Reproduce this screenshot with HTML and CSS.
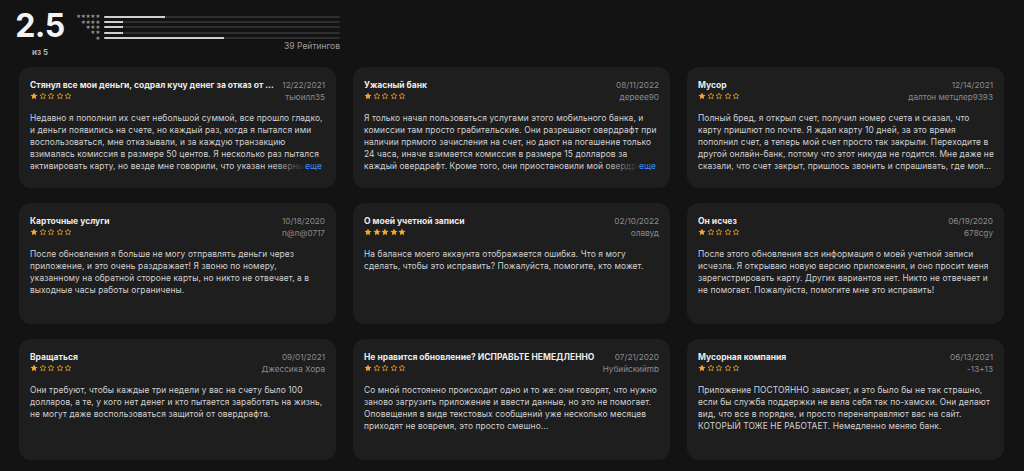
FILE: index.html
```html
<!DOCTYPE html>
<html lang="ru">
<head>
<meta charset="utf-8">
<title>Отзывы</title>
<link rel="stylesheet" href="styles.css">
</head>
<body>
<svg width="0" height="0" class="defs">
  <defs>
    <symbol id="sf" viewBox="0 0 24 24"><path d="M12 1.5l3.2 6.7 7.3.9-5.4 5 1.4 7.3L12 17.8l-6.5 3.6 1.4-7.3-5.4-5 7.3-.9z" fill="#f2a531"/></symbol>
    <symbol id="so" viewBox="0 0 24 24"><path d="M12 3.2l2.7 5.7 6.2.8-4.6 4.3 1.2 6.2L12 17.1l-5.5 3.1 1.2-6.2-4.6-4.3 6.2-.8z" fill="none" stroke="#f2a531" stroke-width="2.2" stroke-linejoin="round"/></symbol>
  </defs>
</svg>

<header class="summary">
  <div class="score">
    <div class="big">2.5</div>
    <div class="outof">из 5</div>
  </div>
  <div class="hist">
    <div class="hrow"><span class="hs">★★★★★</span><span class="track"><span class="fill" style="width:26%"></span></span></div>
    <div class="hrow"><span class="hs">★★★★</span><span class="track"><span class="fill" style="width:8%"></span></span></div>
    <div class="hrow"><span class="hs">★★★</span><span class="track"><span class="fill" style="width:8%"></span></span></div>
    <div class="hrow"><span class="hs">★★</span><span class="track"><span class="fill" style="width:8%"></span></span></div>
    <div class="hrow"><span class="hs">★</span><span class="track"><span class="fill" style="width:51%"></span></span></div>
    <div class="count">39 Рейтингов</div>
  </div>
</header>

<main class="grid">
  <article class="card">
    <div class="head">
      <div class="hl">
        <div class="title">Стянул все мои деньги, содрал кучу денег за отказ от услуг</div>
        <div class="stars"><svg><use href="#sf"/></svg><svg><use href="#so"/></svg><svg><use href="#so"/></svg><svg><use href="#so"/></svg><svg><use href="#so"/></svg></div>
      </div>
      <div class="hr"><div class="date">12/22/2021</div><div class="user">тьюилл35</div></div>
    </div>
    <div class="body clamp">Недавно я пополнил их счет небольшой суммой, все прошло гладко, и деньги появились на счете, но каждый раз, когда я пытался ими воспользоваться, мне отказывали, и за каждую транзакцию взималась комиссия в размере 50 центов. Я несколько раз пытался активировать карту, но везде мне говорили, что указан неверный номер карты, и ничего не помогало.<span class="more">еще</span></div>
  </article>

  <article class="card">
    <div class="head">
      <div class="hl">
        <div class="title">Ужасный банк</div>
        <div class="stars"><svg><use href="#sf"/></svg><svg><use href="#so"/></svg><svg><use href="#so"/></svg><svg><use href="#so"/></svg><svg><use href="#so"/></svg></div>
      </div>
      <div class="hr"><div class="date">08/11/2022</div><div class="user">дереее90</div></div>
    </div>
    <div class="body clamp">Я только начал пользоваться услугами этого мобильного банка, и комиссии там просто грабительские. Они разрешают овердрафт при наличии прямого зачисления на счет, но дают на погашение только 24 часа, иначе взимается комиссия в размере 15 долларов за каждый овердрафт. Кроме того, они приостановили мой овердрафт без объяснения причин.<span class="more">еще</span></div>
  </article>

  <article class="card">
    <div class="head">
      <div class="hl">
        <div class="title">Мусор</div>
        <div class="stars"><svg><use href="#sf"/></svg><svg><use href="#so"/></svg><svg><use href="#so"/></svg><svg><use href="#so"/></svg><svg><use href="#so"/></svg></div>
      </div>
      <div class="hr"><div class="date">12/14/2021</div><div class="user">далтон метцлер9393</div></div>
    </div>
    <div class="body">Полный бред, я открыл счет, получил номер счета и сказал, что карту пришлют по почте. Я ждал карту 10 дней, за это время пополнил счет, а теперь мой счет просто так закрыли. Переходите в другой онлайн-банк, потому что этот никуда не годится. Мне даже не сказали, что счет закрыт, пришлось звонить и спрашивать, где моя...</div>
  </article>

  <article class="card">
    <div class="head">
      <div class="hl">
        <div class="title">Карточные услуги</div>
        <div class="stars"><svg><use href="#sf"/></svg><svg><use href="#so"/></svg><svg><use href="#so"/></svg><svg><use href="#so"/></svg><svg><use href="#so"/></svg></div>
      </div>
      <div class="hr"><div class="date">10/18/2020</div><div class="user">n@n@0717</div></div>
    </div>
    <div class="body">После обновления я больше не могу отправлять деньги через приложение, и это очень раздражает! Я звоню по номеру, указанному на обратной стороне карты, но никто не отвечает, а в выходные часы работы ограничены.</div>
  </article>

  <article class="card">
    <div class="head">
      <div class="hl">
        <div class="title">О моей учетной записи</div>
        <div class="stars"><svg><use href="#sf"/></svg><svg><use href="#sf"/></svg><svg><use href="#sf"/></svg><svg><use href="#sf"/></svg><svg><use href="#sf"/></svg></div>
      </div>
      <div class="hr"><div class="date">02/10/2022</div><div class="user">олавуд</div></div>
    </div>
    <div class="body">На балансе моего аккаунта отображается ошибка. Что я могу сделать, чтобы это исправить? Пожалуйста, помогите, кто может.</div>
  </article>

  <article class="card">
    <div class="head">
      <div class="hl">
        <div class="title">Он исчез</div>
        <div class="stars"><svg><use href="#sf"/></svg><svg><use href="#so"/></svg><svg><use href="#so"/></svg><svg><use href="#so"/></svg><svg><use href="#so"/></svg></div>
      </div>
      <div class="hr"><div class="date">06/19/2020</div><div class="user">678cgy</div></div>
    </div>
    <div class="body">После этого обновления вся информация о моей учетной записи исчезла. Я открываю новую версию приложения, и оно просит меня зарегистрировать карту. Других вариантов нет. Никто не отвечает и не помогает. Пожалуйста, помогите мне это исправить!</div>
  </article>

  <article class="card">
    <div class="head">
      <div class="hl">
        <div class="title">Вращаться</div>
        <div class="stars"><svg><use href="#sf"/></svg><svg><use href="#so"/></svg><svg><use href="#so"/></svg><svg><use href="#so"/></svg><svg><use href="#so"/></svg></div>
      </div>
      <div class="hr"><div class="date">09/01/2021</div><div class="user">Джессика Хора</div></div>
    </div>
    <div class="body">Они требуют, чтобы каждые три недели у вас на счету было 100 долларов, а те, у кого нет денег и кто пытается заработать на жизнь, не могут даже воспользоваться защитой от овердрафта.</div>
  </article>

  <article class="card">
    <div class="head">
      <div class="hl">
        <div class="title">Не нравится обновление? ИСПРАВЬТЕ НЕМЕДЛЕННО</div>
        <div class="stars"><svg><use href="#sf"/></svg><svg><use href="#so"/></svg><svg><use href="#so"/></svg><svg><use href="#so"/></svg><svg><use href="#so"/></svg></div>
      </div>
      <div class="hr"><div class="date">07/21/2020</div><div class="user">Нубийскийmb</div></div>
    </div>
    <div class="body">Со мной постоянно происходит одно и то же: они говорят, что нужно заново загрузить приложение и ввести данные, но это не помогает. Оповещения в виде текстовых сообщений уже несколько месяцев приходят не вовремя, это просто смешно...</div>
  </article>

  <article class="card">
    <div class="head">
      <div class="hl">
        <div class="title">Мусорная компания</div>
        <div class="stars"><svg><use href="#sf"/></svg><svg><use href="#so"/></svg><svg><use href="#so"/></svg><svg><use href="#so"/></svg><svg><use href="#so"/></svg></div>
      </div>
      <div class="hr"><div class="date">06/13/2021</div><div class="user">-13+13</div></div>
    </div>
    <div class="body">Приложение ПОСТОЯННО зависает, и это было бы не так страшно, если бы служба поддержки не вела себя так по-хамски. Они делают вид, что все в порядке, и просто перенаправляют вас на сайт. КОТОРЫЙ ТОЖЕ НЕ РАБОТАЕТ. Немедленно меняю банк.</div>
  </article>
</main>
</body>
</html>
```

FILE: styles.css
```css
* { box-sizing: border-box; }
html, body { margin: 0; padding: 0; }
body {
  background: #131313;
  color: #e6e6e6;
  font-family: Inter, "Noto Sans", "Liberation Sans", sans-serif;
  width: 1024px;
  height: 471px;
  overflow: hidden;
}
.defs { position: absolute; }

.summary {
  display: flex;
  align-items: flex-start;
  height: 67px;
  padding: 11px 0 0 17px;
}
.score {
  display: flex;
  flex-direction: column;
  align-items: center;
  width: 46px;
}
.big {
  font-size: 32px;
  font-weight: 700;
  line-height: 30px;
  color: #f4f4f4;
  letter-spacing: -0.5px;
}
.outof {
  margin-top: 6px;
  font-size: 8px;
  font-weight: 600;
  color: #bdbdbd;
}
.hist {
  margin-left: 12px;
  width: 265px;
  padding-top: 3px;
}
.hrow {
  display: flex;
  align-items: center;
  height: 5.4px;
}
.hs {
  width: 29px;
  text-align: right;
  font-size: 5px;
  line-height: 5px;
  letter-spacing: -0.4px;
  color: #9a9a9e;
  padding-right: 4px;
}
.track {
  flex: 1;
  height: 2px;
  background: #2e2e30;
  border-radius: 1px;
  overflow: hidden;
}
.fill {
  display: block;
  height: 100%;
  background: #cfcfcf;
}
.count {
  margin-top: 0;
  text-align: right;
  font-size: 8.5px;
  color: #9c9c9f;
}

.grid {
  display: grid;
  grid-template-columns: repeat(3, 1fr);
  grid-auto-rows: 121px;
  column-gap: 17px;
  row-gap: 15px;
  padding: 0 20px 0 19px;
}
.card {
  background: #1e1e1f;
  border-radius: 12px;
  padding: 12px 11px 0 11px;
  overflow: hidden;
}
.head {
  display: flex;
  justify-content: space-between;
  gap: 8px;
}
.hl { min-width: 0; flex: 1; }
.title {
  font-size: 8.5px;
  font-weight: 700;
  line-height: 12px;
  color: #ececec;
  white-space: nowrap;
  overflow: hidden;
  text-overflow: ellipsis;
}
.stars {
  display: flex;
  gap: 0.6px;
  margin-top: 0.5px;
  height: 8px;
}
.stars svg { width: 8px; height: 8px; }
.hr {
  text-align: right;
  flex-shrink: 0;
}
.date, .user {
  font-size: 8.2px;
  line-height: 12px;
  color: #8b8b8e;
  white-space: nowrap;
}
.body {
  position: relative;
  margin-top: 9px;
  margin-right: -1px;
  font-size: 8.4px;
  letter-spacing: 0.1px;
  line-height: 12px;
  color: #d2d2d2;
}
.clamp {
  height: 60px;
  overflow: hidden;
}
.more {
  position: absolute;
  right: 2px;
  top: 48px;
  padding-left: 34px;
  padding-right: 2px;
  height: 12px;
  color: #3f8cf5;
  background: linear-gradient(to right, rgba(30,30,31,0), #1e1e1f 65%);
}
```
